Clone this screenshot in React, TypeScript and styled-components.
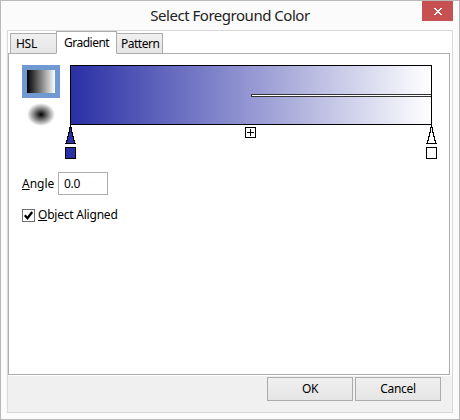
import React from 'react';
import styled, { createGlobalStyle } from 'styled-components';

const Global = createGlobalStyle`
  *, *::before, *::after { box-sizing: border-box; }
  body { margin: 0; background: #fff; }
  button, input { font: inherit; color: inherit; margin: 0; padding: 0; border-radius: 0; outline: none; }
`;

const Window = styled.div`
  width: 460px;
  height: 420px;
  display: flex;
  flex-direction: column;
  padding: 0 6px 6px;
  border: 1px solid #b9b9b9;
  background: #fbfbfb;
  color: #000;
  font: 12px/16px "Noto Sans", "Open Sans", sans-serif;
`;

const TitleBar = styled.header`
  position: relative;
  height: 29px;
  flex: none;
  text-align: center;
`;

const Label = styled.span<{ $spacing?: number }>`
  display: inline-block;
  white-space: nowrap;
  letter-spacing: ${p => p.$spacing ?? -0.3}px;
`;

const Title = styled.h1`
  margin: 0;
  font-size: 15px;
  font-weight: 400;
  line-height: 29px;
  letter-spacing: -0.48px;
  color: #222;
`;

const CloseButton = styled.button`
  position: absolute;
  top: 0;
  right: 0;
  width: 31px;
  height: 20px;
  border: 0;
  background: #c75050;
  svg { display: block; margin: 1px auto 0; }
`;

const Client = styled.main`
  flex: 1;
  display: flex;
  flex-direction: column;
  border: 1px solid #d8d8d8;
  background: #fff;
`;

const Tabs = styled.nav`
  display: flex;
  align-items: flex-end;
  height: 23px;
  padding-left: 2px;
  margin-bottom: -1px;
  z-index: 1;
`;

const Tab = styled.button<{ $active?: boolean; $width: number; $pad: number }>`
  width: ${p => p.$width}px;
  height: ${p => (p.$active ? 23 : 21)}px;
  margin-right: -1px;
  padding-left: ${p => p.$pad}px;
  z-index: ${p => (p.$active ? 2 : 1)};
  position: relative;
  text-align: left;
  line-height: 19px;
  border: 1px solid #acacac;
  border-bottom-color: ${p => (p.$active ? '#fff' : '#acacac')};
  background: ${p => (p.$active ? '#fff' : 'linear-gradient(#f0f0f0, #e5e5e5)')};
`;

const Panel = styled.section`
  width: 442px;
  height: 322px;
  padding: 11px 0 0 13px;
  border: 1px solid #acacac;
`;

const GradientArea = styled.div`
  display: flex;
  gap: 10px;
  height: 107px;
`;

const Kinds = styled.div`
  display: flex;
  flex-direction: column;
`;

const KindButton = styled.button<{ $selected?: boolean }>`
  width: 38px;
  height: 33px;
  padding: 5px;
  border: 0;
  background: ${p => (p.$selected ? '#7099d1' : 'transparent')};
`;

const Swatch = styled.span<{ $radial?: boolean }>`
  display: block;
  width: 28px;
  height: 23px;
  background: ${p => (p.$radial
    ? 'radial-gradient(14px 11.5px at center, #000, #fff)'
    : 'linear-gradient(90deg, #000, #fff)')};
`;

const Editor = styled.div`
  width: 372px;
`;

const Ramp = styled.div`
  width: 362px;
  height: 60px;
  padding-top: 28px;
  border: 1px solid #000;
  background: linear-gradient(90deg, #2a30a5, #fff);
`;

const OpacityLine = styled.div`
  width: 180px;
  height: 3px;
  margin-left: 180px;
  border: 1px solid #333;
  border-right: 0;
  background: #fff;
`;

const Stops = styled.div`
  display: grid;
  grid-template-columns: 180px 181px 11px;
  width: 372px;
  margin-left: -5px;
  svg { display: block; }
  svg:nth-child(2) { grid-column: 2; }
`;

const Row = styled.div`
  display: flex;
  align-items: center;
`;

const AngleInput = styled.input`
  width: 50px;
  height: 23px;
  margin-left: 3px;
  padding: 0 0 1px 5px;
  border: 1px solid #abadb3;
  background: #fff;
  letter-spacing: -0.3px;
`;

const FieldName = styled.label`
  width: 33px;
  white-space: nowrap;
  letter-spacing: 0;
`;

const CheckRow = styled.label`
  display: flex;
  align-items: center;
  height: 16px;
  margin-top: 12px;
  gap: 3px;
`;

const CheckBox = styled.span`
  width: 13px;
  height: 13px;
  border: 1px solid #707070;
  background: #fff;
  svg { display: block; }
`;

const Footer = styled.footer`
  flex: 1;
  display: flex;
  justify-content: flex-end;
  gap: 2px;
  margin-top: 1px;
  padding: 1px 11px 0 0;
  background: #f0f0f0;
`;

const Button = styled.button`
  width: 86px;
  height: 24px;
  border: 1px solid #acacac;
  background: linear-gradient(#f0f0f0, #e5e5e5);
`;

function Stop({ fill }: { fill: string }) {
  return (
    <svg width="11" height="34" viewBox="0 0 11 34" shapeRendering="crispEdges">
      <path d="M5 0h1v2h1v5h1v4h1v4h1v3h1v1H0v-1h1v-3h1v-4h1v-4h1v-5h1z" fill="#000" />
      <path d="M5 3h1v5h1v4h1v4h1v2H2v-2h1v-4h1v-4h1z" fill={fill} />
      <rect x="0.5" y="22.5" width="10" height="11" fill={fill} stroke="#000" />
    </svg>
  );
}

export default function App() {
  return (
    <>
      <Global />
      <Window>
        <TitleBar>
          <Title>Select Foreground Color</Title>
          <CloseButton aria-label="Close">
            <svg width="8" height="7" viewBox="0 0 8 7" shapeRendering="crispEdges">
              <path d="M0 0h2v1H0zM6 0h2v1H6zM1 1h2v1H1zM5 1h2v1H5zM2 2h4v1H2zM3 3h2v1H3zM2 4h4v1H2zM1 5h2v1H1zM5 5h2v1H5zM0 6h2v1H0zM6 6h2v1H6z" fill="#fff" />
            </svg>
          </CloseButton>
        </TitleBar>
        <Client>
          <Tabs>
            <Tab $width={47} $pad={5}><Label>HSL</Label></Tab>
            <Tab $width={61} $pad={7} $active><Label $spacing={-0.5}>Gradient</Label></Tab>
            <Tab $width={47} $pad={4}><Label $spacing={-0.5}>Pattern</Label></Tab>
          </Tabs>
          <Panel>
            <GradientArea>
              <Kinds>
                <KindButton $selected aria-label="Linear"><Swatch /></KindButton>
                <KindButton aria-label="Radial"><Swatch $radial /></KindButton>
              </Kinds>
              <Editor>
                <Ramp><OpacityLine /></Ramp>
                <Stops>
                  <Stop fill="#2a30a5" />
                  <svg width="11" height="13" viewBox="0 0 11 13" shapeRendering="crispEdges">
                    <path d="M0.5 2.5H10.5V12.5H0.5ZM2 7.5H9M5.5 4V11" fill="none" stroke="#000" />
                  </svg>
                  <Stop fill="#fff" />
                </Stops>
              </Editor>
            </GradientArea>
            <Row>
              <FieldName htmlFor="angle"><u>A</u>ngle</FieldName>
              <AngleInput id="angle" defaultValue="0.0" />
            </Row>
            <CheckRow>
              <CheckBox>
                <svg width="11" height="11" viewBox="0 0 11 11"><path d="M1.8 5.2L4.5 8.2L9.2 2" fill="none" stroke="#000" strokeWidth="2.3" /></svg>
              </CheckBox>
              <Label $spacing={-0.22}><u>O</u>bject Aligned</Label>
            </CheckRow>
          </Panel>
          <Footer>
            <Button><Label>OK</Label></Button>
            <Button><Label>Cancel</Label></Button>
          </Footer>
        </Client>
      </Window>
    </>
  );
}
